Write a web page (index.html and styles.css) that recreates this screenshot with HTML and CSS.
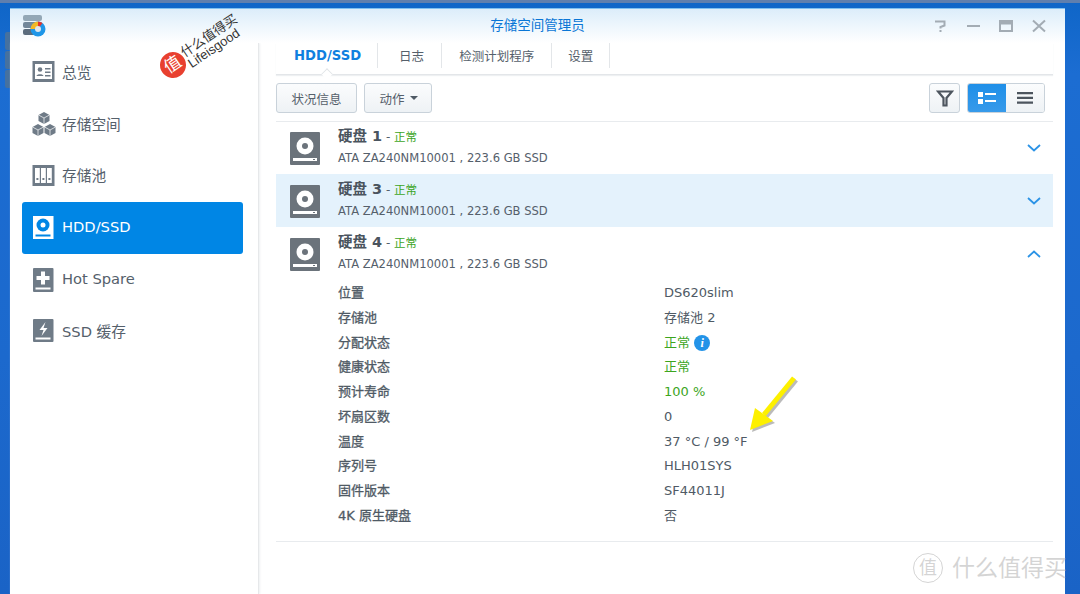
FILE: index.html
```html
<!DOCTYPE html>
<html lang="zh">
<head>
<meta charset="utf-8">
<title>存储空间管理员</title>
<link rel="stylesheet" href="styles.css">
</head>
<body>
<div class="desktop">
  <div class="dock"><i></i><i></i><i></i></div>
  <div class="window">
    <header class="titlebar">
      <svg class="app-icon" viewBox="0 0 26 24" width="26" height="24">
        <rect x="1" y="1" width="19" height="6" rx="2" fill="#93a7b6"/>
        <rect x="1" y="8" width="19" height="6" rx="2" fill="#72879a"/>
        <rect x="1" y="15" width="19" height="6" rx="2" fill="#5b6c7d"/>
        <circle cx="16" cy="15" r="7.500" fill="#1e96e8"/>
        <path d="M16 15V7.500A7.500 7.500 0 0 0 8.500 15Z" fill="#f2b824"/>
        <path d="M16 15V7.500A7.500 7.500 0 0 1 20.500 9Z" fill="#e3342b"/>
        <circle cx="16" cy="15" r="3" fill="#dfe6ec"/>
      </svg>
      <div class="title">存储空间管理员</div>
      <div class="controls">
        <svg viewBox="0 0 14 14" width="14" height="14"><path d="M2 2.500H11.500V6.500L7.500 8V9.500M7.500 11V13" fill="none" stroke="#a3acb4" stroke-width="2"/></svg>
        <svg viewBox="0 0 14 14" width="14" height="14"><path d="M1 7H14" stroke="#a3acb4" stroke-width="2"/></svg>
        <svg viewBox="0 0 14 14" width="14" height="14"><path d="M1 2H13V12H1Z" fill="none" stroke="#a3acb4" stroke-width="2"/><path d="M1 4H13" stroke="#a3acb4" stroke-width="3"/></svg>
        <svg viewBox="0 0 14 14" width="14" height="14"><path d="M1 1.500L13 12.500M13 1.500L1 12.500" stroke="#a3acb4" stroke-width="2"/></svg>
      </div>
    </header>
    <div class="body">
      <nav class="sidebar">
        <a class="nav-item">
          <svg viewBox="0 0 24 22" width="24" height="22"><rect x="0.500" width="22" height="21" fill="#6f7b87"/><rect x="3" y="3" width="17" height="15" fill="#fff"/><circle cx="8" cy="8.500" r="2.300" fill="#6f7b87"/><path d="M4.500 15c0-2.500 7-2.500 7 0zM13 7h5.500v1.500H13zM13 10.500h5.500V12H13zM13 14h5.500v1.500H13z" fill="#6f7b87"/></svg>
          <span>总览</span>
        </a>
        <a class="nav-item">
          <svg viewBox="0 0 24 24" width="24" height="24"><path d="M12 0l5.500 3v6L12 12 6.500 9V3zM6 12l5.500 3v6L6 24 .5 21v-6zM18 12l5.500 3v6L18 24l-5.500-3v-6z" fill="#6f7b87"/><path d="M6.500 3L12 6l5.500-3M.5 15L6 18l5.500-3M12.500 15L18 18l5.500-3M12 6v6M6 18v6M18 18v6" fill="none" stroke="#fff" stroke-width=".7"/></svg>
          <span>存储空间</span>
        </a>
        <a class="nav-item">
          <svg viewBox="0 0 24 22" width="24" height="22"><rect x="0.500" width="22" height="21" fill="#6f7b87"/><path d="M3 3h4.800v15H3zM9 3h4.800v15H9zM15 3h4.800v15H15z" fill="#fff"/><path d="M4.400 13h2v2h-2zM10.400 13h2v2h-2zM16.400 13h2v2h-2z" fill="#6f7b87"/></svg>
          <span>存储池</span>
        </a>
        <a class="nav-item active">
          <svg viewBox="0 0 22 23" width="22" height="23"><rect x="1" width="20.500" height="23" fill="#fff"/><circle cx="11" cy="9" r="6.500" fill="#0086e5"/><circle cx="11" cy="9" r="2.500" fill="#fff"/><rect x="3.500" y="18.500" width="15" height="2" fill="#0086e5"/></svg>
          <span>HDD/SSD</span>
        </a>
        <a class="nav-item">
          <svg viewBox="0 0 22 24" width="22" height="24"><rect x="1" width="20.500" height="24" rx="1" fill="#6f7b87"/><path d="M9 3.500h4V8h4.500v4H13v4.500H9V12H4.500V8H9z" fill="#fff"/><rect x="3.500" y="19.500" width="15" height="2" fill="#fff"/></svg>
          <span>Hot Spare</span>
        </a>
        <a class="nav-item">
          <svg viewBox="0 0 22 24" width="22" height="24"><rect x="1" width="20.500" height="23" rx="1" fill="#6f7b87"/><path d="M13.500 3L7.500 11h4l-2 6 6-8h-4z" fill="#fff"/><rect x="3.500" y="18.500" width="15" height="2" fill="#fff"/></svg>
          <span>SSD 缓存</span>
        </a>
      </nav>
      <main class="main">
        <div class="tabs">
          <a class="tab current">HDD/SSD</a>
          <a class="tab tab-log">日志</a>
          <a class="tab">检测计划程序</a>
          <a class="tab tab-last">设置</a>
        </div>
        <div class="toolbar">
          <button class="btn">状况信息</button>
          <button class="btn btn-action">动作<b class="caret"></b></button>
          <div class="spacer"></div>
          <button class="btn btn-icon">
            <svg viewBox="0 0 18 18" width="18" height="18"><path d="M2 2.500H16L10.500 9V16.500H7.500V9Z" fill="none" stroke="#4d555e" stroke-width="2.200"/></svg>
          </button>
          <div class="segment">
            <button class="seg on">
              <svg viewBox="0 0 18 14" width="18" height="14"><path d="M0 1h5v5H0zM0 8h5v5H0zM7 2h11v2H7zM7 9h11v2H7z" fill="#fff"/></svg>
            </button>
            <button class="seg">
              <svg viewBox="0 0 16 12" width="16" height="12"><path d="M0 0h16v2.200H0zM0 4.800h16V7H0zM0 9.600h16v2.200H0z" fill="#4d555e"/></svg>
            </button>
          </div>
        </div>
        <section class="list">
          <article class="disk">
            <svg class="disk-icon" viewBox="0 0 30 33" width="30" height="33"><rect width="30" height="33" rx="1" fill="#6b737b"/><circle cx="15" cy="14" r="8.500" fill="#fff"/><circle cx="15" cy="14" r="3" fill="#6b737b"/><path d="M3 26h24v3H3z" fill="#fff"/><path d="M23 27h2v1h-2z" fill="#6b737b"/></svg>
            <div class="disk-text">
              <div class="disk-name"><strong>硬盘 1</strong> - <em>正常</em></div>
              <div class="disk-model">ATA ZA240NM10001 , 223.6 GB SSD</div>
            </div>
            <svg class="chev" viewBox="0 0 14 8" width="14" height="8"><path d="M1 1l6 5.500L13 1" fill="none" stroke="#2b93e6" stroke-width="1.800"/></svg>
          </article>
          <article class="disk hl">
            <svg class="disk-icon" viewBox="0 0 30 33" width="30" height="33"><rect width="30" height="33" rx="1" fill="#6b737b"/><circle cx="15" cy="14" r="8.500" fill="#fff"/><circle cx="15" cy="14" r="3" fill="#6b737b"/><path d="M3 26h24v3H3z" fill="#fff"/><path d="M23 27h2v1h-2z" fill="#6b737b"/></svg>
            <div class="disk-text">
              <div class="disk-name"><strong>硬盘 3</strong> - <em>正常</em></div>
              <div class="disk-model">ATA ZA240NM10001 , 223.6 GB SSD</div>
            </div>
            <svg class="chev" viewBox="0 0 14 8" width="14" height="8"><path d="M1 1l6 5.500L13 1" fill="none" stroke="#2b93e6" stroke-width="1.800"/></svg>
          </article>
          <article class="disk">
            <svg class="disk-icon" viewBox="0 0 30 33" width="30" height="33"><rect width="30" height="33" rx="1" fill="#6b737b"/><circle cx="15" cy="14" r="8.500" fill="#fff"/><circle cx="15" cy="14" r="3" fill="#6b737b"/><path d="M3 26h24v3H3z" fill="#fff"/><path d="M23 27h2v1h-2z" fill="#6b737b"/></svg>
            <div class="disk-text">
              <div class="disk-name"><strong>硬盘 4</strong> - <em>正常</em></div>
              <div class="disk-model">ATA ZA240NM10001 , 223.6 GB SSD</div>
            </div>
            <svg class="chev" viewBox="0 0 14 8" width="14" height="8"><path d="M1 7l6-5.500L13 7" fill="none" stroke="#2b93e6" stroke-width="1.800"/></svg>
          </article>
          <dl class="details">
            <dt>位置</dt><dd>DS620slim</dd>
            <dt>存储池</dt><dd>存储池 2</dd>
            <dt>分配状态</dt><dd class="ok">正常 <i class="info">i</i></dd>
            <dt>健康状态</dt><dd class="ok">正常</dd>
            <dt>预计寿命</dt><dd class="ok">100 %</dd>
            <dt>坏扇区数</dt><dd>0</dd>
            <dt>温度</dt><dd>37 °C / 99 °F</dd>
            <dt>序列号</dt><dd>HLH01SYS</dd>
            <dt>固件版本</dt><dd>SF44011J</dd>
            <dt>4K 原生硬盘</dt><dd>否</dd>
          </dl>
        </section>
      </main>
    </div>
  </div>
  <div class="stamp">
    <span class="stamp-badge">值</span>
    <span class="stamp-text">什么值得买<br>Lifeisgood</span>
  </div>
  <svg class="arrow" viewBox="0 0 60 62" width="60" height="62">
    <path d="M46 3L16 39.500" stroke="#555" stroke-opacity=".4" stroke-width="5" fill="none" transform="translate(2 2)"/>
    <path d="M2 55L7 33L25 46Z" fill="#555" fill-opacity=".4" transform="translate(2 2)"/>
    <path d="M46 3L16 39.500" stroke="#fdf000" stroke-width="5" fill="none"/>
    <path d="M2 55L7 33L25 46Z" fill="#fdf000"/>
  </svg>
  <div class="watermark"><span class="wm-badge">值</span><span>什么值得买</span></div>
</div>
</body>
</html>
```
FILE: styles.css
```css
* { box-sizing: border-box; }
html, body { margin: 0; height: 100%; overflow: hidden; }
body {
  font-family: "DejaVu Sans", "Noto Sans CJK SC", sans-serif;
  color: #4f5a65;
  font-size: 13px;
}
.desktop {
  position: relative;
  width: 1080px;
  height: 594px;
  padding: 5px 15px 0 10px;
  background: linear-gradient(180deg, #0f66c8, #1c6dd2 12%, #1c69cd 60%, #1a63c6);
  border-top: 3px solid #5f7fae;
  overflow: hidden;
}
.dock { position: absolute; left: 5px; top: 29px; display: flex; flex-direction: column; gap: 1px; }
.dock i { display: block; width: 5px; height: 18px; background: #46719f; border-radius: 2px 0 0 2px; }
.window {
  position: relative;
  height: 100%;
  background: #fff;
  border-top: 1px solid #7fc0f0;
  display: flex;
  flex-direction: column;
}
.titlebar {
  position: relative;
  height: 34px;
  flex: none;
  display: flex;
  align-items: flex-start;
  background: linear-gradient(180deg, #dcedfa, #fff);
}
.app-icon { margin: 5px 0 0 12px; flex: none; }
.title {
  position: absolute;
  left: 0;
  right: 0;
  top: 6px;
  text-align: center;
  font-size: 13.500px;
  line-height: 20px;
  color: #0a76d6;
}
.controls {
  margin-left: auto;
  margin-top: 10px;
  margin-right: 19px;
  display: flex;
  gap: 19px;
}
.body { flex: 1; display: flex; min-height: 0; }
.sidebar {
  width: 249px;
  flex: none;
  border-right: 1px solid #e6e8ea;
  box-shadow: 1px 0 2px #eef0f2;
  padding: 3.500px 15px 0 12px;
}
.nav-item {
  height: 51.800px;
  display: grid;
  grid-template-columns: 30px 1fr;
  align-items: center;
  padding-left: 10px;
  font-size: 14.700px;
  color: #55606b;
  border-radius: 3px;
}
.nav-item span { white-space: nowrap; margin-top: -2px; }
.nav-item.active { background: #0086e5; color: #fff; }
.main { flex: 1; padding: 0 12px 0 17px; min-width: 0; }
.tabs {
  height: 32px;
  display: flex;
  border-bottom: 1px solid #e3e6e9;
  box-shadow: 0 1px 1px #eef0f2;
  position: relative;
}
.tab {
  display: flex;
  align-items: center;
  justify-content: center;
  height: 25px;
  padding: 0 17px;
  font-size: 12.500px;
  border-right: 1px solid #e3e6e9;
  color: #55606b;
}
.tab.tab-log { padding: 0 17px 0 21px; }
.tab.tab-last { padding: 0 16px; }
.tab.current {
  font-weight: bold;
  color: #0f7fdf;
  font-size: 13.200px;
  padding: 0 16px 0 18px;
  position: relative;
}
.tab.current::after {
  content: "";
  position: absolute;
  left: 50%;
  bottom: -10.500px;
  width: 9px;
  height: 9px;
  margin-left: -5px;
  background: #fff;
  border-left: 1px solid #dfe3e6;
  border-top: 1px solid #dfe3e6;
  transform: rotate(45deg) scale(.8);
}
.toolbar {
  height: 47px;
  padding-top: 8px;
  display: flex;
  align-items: flex-start;
  gap: 7px;
  border-bottom: 1px solid #e8ebee;
}
.btn {
  height: 30px;
  font: inherit;
  font-size: 12.500px;
  color: #55606b;
  background: linear-gradient(180deg, #fbfcfd, #eef2f5);
  border: 1px solid #c9d2da;
  border-radius: 3px;
  padding: 0 14.500px;
  display: flex;
  align-items: center;
}
.btn-action { gap: 5px; padding-right: 13.500px; }
.caret {
  width: 0; height: 0;
  border-left: 4px solid transparent;
  border-right: 4px solid transparent;
  border-top: 4px solid #4f5a65;
}
.spacer { flex: 1; }
.btn-icon { width: 31px; padding: 0; justify-content: center; }
.segment {
  display: flex;
  height: 30px;
  width: 78px;
  margin-right: 8px;
  border-radius: 3px;
  overflow: hidden;
  border: 1px solid #c9d2da;
}
.seg {
  flex: 1;
  border: 0;
  padding: 0;
  display: flex;
  align-items: center;
  justify-content: center;
  background: linear-gradient(180deg, #fbfcfd, #eef2f5);
}
.seg.on { background: linear-gradient(180deg, #1f8fe8, #379aea); }
.list { border-bottom: 1px solid #e8ebee; padding-bottom: 12px; margin-top: -1px; }
.disk {
  height: 53px;
  display: flex;
  align-items: center;
  padding: 3px 12px 0 14px;
}
.disk.hl { background: #e4f2fc; }
.disk-icon { flex: none; margin: -2px 18px 0 0; }
.disk-text { flex: 1; }
.disk-name { font-size: 12px; line-height: 20px; color: #55606b; margin-top: -4px; }
.disk-name strong { font-size: 14.500px; color: #4a545e; }
.disk-name em { font-style: normal; color: #3ca51e; font-size: 11.500px; }
.disk-model { line-height: 20px; margin-top: 1px; font-size: 11.550px; color: #55606b; }
.chev { flex: none; margin-top: -3px; }
.details {
  display: grid;
  grid-template-columns: 326px 1fr;
  grid-auto-rows: 24.750px;
  margin: 0;
  padding: 1px 0 0 62px;
}
.details dt { font-weight: normal; color: #4f5a65; line-height: 24.750px; -webkit-text-stroke: .3px #4f5a65; }
.details dd { margin: 0; line-height: 24.750px; }
.details dd.ok { color: #3ca51e; }
.info {
  display: inline-block;
  width: 16px; height: 16px;
  margin-left: 0;
  border-radius: 50%;
  background: #2393e8;
  color: #fff;
  font: italic bold 12px/16px "Liberation Serif", serif;
  text-align: center;
  vertical-align: 0;
}
.stamp {
  position: absolute;
  left: 160px;
  top: 6px;
  width: 90px;
  height: 70px;
}
.stamp-badge {
  position: absolute;
  left: 0;
  top: 43px;
  width: 26px;
  height: 26px;
  border-radius: 50%;
  background: #e8402f;
  color: #fff;
  font-size: 17px;
  line-height: 25px;
  text-align: center;
  transform: rotate(-34deg);
}
.stamp-text {
  position: absolute;
  left: 20px;
  top: 19px;
  font: 13px/13px "Liberation Sans", "Noto Sans CJK SC", sans-serif;
  color: #333;
  white-space: nowrap;
  transform: rotate(-34deg);
}
.arrow { position: absolute; left: 748px; top: 372px; }
.watermark {
  position: absolute;
  left: 913px;
  top: 550px;
  display: flex;
  align-items: center;
  gap: 9px;
  font-size: 23px;
  line-height: 30px;
  color: rgba(170, 170, 170, .5);
  white-space: nowrap;
}
.wm-badge {
  width: 30px;
  height: 30px;
  border: 1px solid rgba(170, 170, 170, .5);
  border-radius: 50%;
  font-size: 18px;
  line-height: 28px;
  text-align: center;
}
```
